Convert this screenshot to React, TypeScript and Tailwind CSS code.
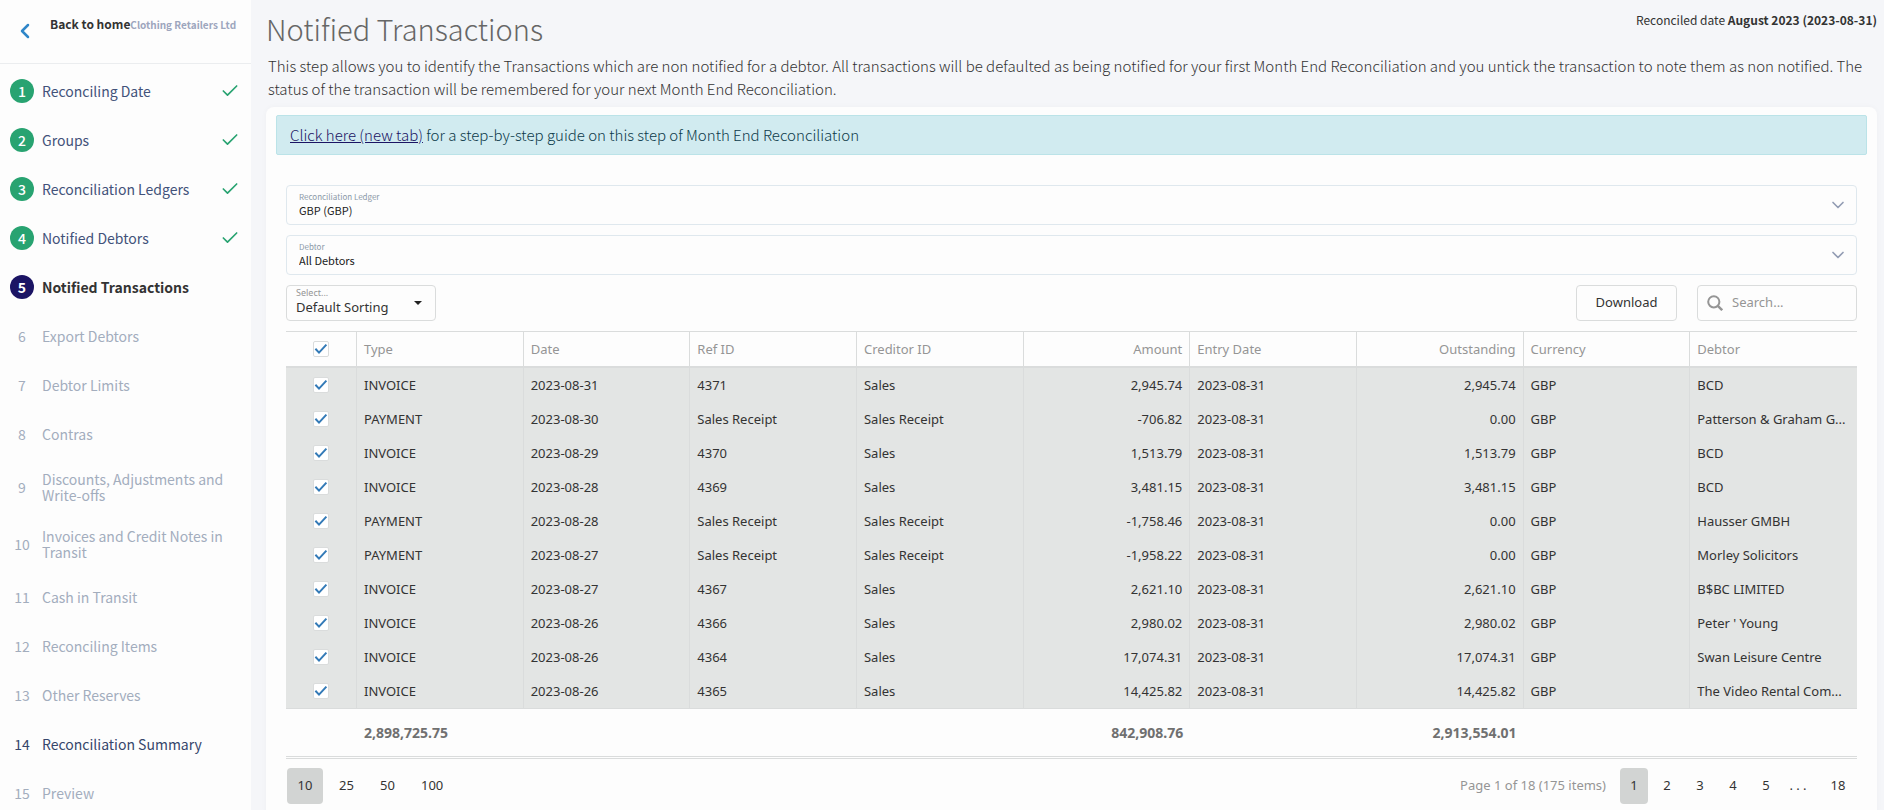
import { Check, ChevronDown, ChevronLeft } from "lucide-react";
import type React from "react";
import { useState } from "react";

type StepState = "done" | "current" | "open" | "locked";

interface Step {
	label: string;
	state: StepState;
}

interface Transaction {
	type: string;
	date: string;
	refId: string;
	creditorId: string;
	amount: string;
	entryDate: string;
	outstanding: string;
	debtor: string;
}

const steps: Step[] = [
	{ label: "Reconciling Date", state: "done" },
	{ label: "Groups", state: "done" },
	{ label: "Reconciliation Ledgers", state: "done" },
	{ label: "Notified Debtors", state: "done" },
	{ label: "Notified Transactions", state: "current" },
	{ label: "Export Debtors", state: "locked" },
	{ label: "Debtor Limits", state: "locked" },
	{ label: "Contras", state: "locked" },
	{ label: "Discounts, Adjustments and Write-offs", state: "locked" },
	{ label: "Invoices and Credit Notes in Transit", state: "locked" },
	{ label: "Cash in Transit", state: "locked" },
	{ label: "Reconciling Items", state: "locked" },
	{ label: "Other Reserves", state: "locked" },
	{ label: "Reconciliation Summary", state: "open" },
	{ label: "Preview", state: "locked" },
];

const transactions: Transaction[] = [
	{ type: "INVOICE", date: "2023-08-31", refId: "4371", creditorId: "Sales", amount: "2,945.74", entryDate: "2023-08-31", outstanding: "2,945.74", debtor: "BCD" },
	{ type: "PAYMENT", date: "2023-08-30", refId: "Sales Receipt", creditorId: "Sales Receipt", amount: "-706.82", entryDate: "2023-08-31", outstanding: "0.00", debtor: "Patterson & Graham G..." },
	{ type: "INVOICE", date: "2023-08-29", refId: "4370", creditorId: "Sales", amount: "1,513.79", entryDate: "2023-08-31", outstanding: "1,513.79", debtor: "BCD" },
	{ type: "INVOICE", date: "2023-08-28", refId: "4369", creditorId: "Sales", amount: "3,481.15", entryDate: "2023-08-31", outstanding: "3,481.15", debtor: "BCD" },
	{ type: "PAYMENT", date: "2023-08-28", refId: "Sales Receipt", creditorId: "Sales Receipt", amount: "-1,758.46", entryDate: "2023-08-31", outstanding: "0.00", debtor: "Hausser GMBH" },
	{ type: "PAYMENT", date: "2023-08-27", refId: "Sales Receipt", creditorId: "Sales Receipt", amount: "-1,958.22", entryDate: "2023-08-31", outstanding: "0.00", debtor: "Morley Solicitors" },
	{ type: "INVOICE", date: "2023-08-27", refId: "4367", creditorId: "Sales", amount: "2,621.10", entryDate: "2023-08-31", outstanding: "2,621.10", debtor: "B$BC LIMITED" },
	{ type: "INVOICE", date: "2023-08-26", refId: "4366", creditorId: "Sales", amount: "2,980.02", entryDate: "2023-08-31", outstanding: "2,980.02", debtor: "Peter ' Young" },
	{ type: "INVOICE", date: "2023-08-26", refId: "4364", creditorId: "Sales", amount: "17,074.31", entryDate: "2023-08-31", outstanding: "17,074.31", debtor: "Swan Leisure Centre" },
	{ type: "INVOICE", date: "2023-08-26", refId: "4365", creditorId: "Sales", amount: "14,425.82", entryDate: "2023-08-31", outstanding: "14,425.82", debtor: "The Video Rental Com..." },
];

const columns = [
	{ title: "Type" },
	{ title: "Date" },
	{ title: "Ref ID" },
	{ title: "Creditor ID" },
	{ title: "Amount", numeric: true },
	{ title: "Entry Date" },
	{ title: "Outstanding", numeric: true },
	{ title: "Currency" },
	{ title: "Debtor" },
];

const badgeStyles: Record<StepState, string> = {
	done: "bg-[#28a371] text-white font-medium",
	current: "bg-[#1b1464] text-white font-bold",
	open: "text-[#36466b]",
	locked: "text-[#a3adbd]",
};

const labelStyles: Record<StepState, string> = {
	done: "text-[#42527a]",
	current: "text-[#333] font-bold",
	open: "text-[#36466b]",
	locked: "text-[#a3adbd]",
};

const Sidebar: React.FC = () => (
	<aside className="w-[251px] shrink-0 bg-[#fdfdfd]">
		<div className="flex h-16 border-b border-[#ebedef] pt-[17px]">
			<a href="#home" className="flex text-[#333] leading-[14px]">
				<ChevronLeft className="ml-[13px] mt-0.5 h-6 w-6 text-[#2f86c8]" strokeWidth={2.5} />
				<span className="ml-[13px] text-[12px] font-bold">Back to home</span>
			</a>
			<span className="text-[10px] font-bold leading-[15px] text-[#9da6bd]">Clothing Retailers Ltd</span>
		</div>
		<nav aria-label="Reconciliation steps" className="pt-[3px]">
			<ol className="flex flex-col gap-px">
				{steps.map((step, i) => (
					<li key={step.label}>
						<a href={`#step-${i + 1}`} className="flex items-center py-3 pl-[10px] pr-[11px]">
							<span
								className={`flex h-6 w-6 shrink-0 items-center justify-center rounded-full text-[14px] leading-[22px] ${badgeStyles[step.state]}`}
							>
								{i + 1}
							</span>
							<span className={`ml-2 grow text-[14px] leading-4 ${labelStyles[step.state]}`}>{step.label}</span>
							{step.state === "done" && <Check className="h-5 w-5 text-[#28a371]" strokeWidth={2} />}
						</a>
					</li>
				))}
			</ol>
		</nav>
	</aside>
);

interface FilterSelectProps {
	id: string;
	label: string;
	value: string;
}

const FilterSelect: React.FC<FilterSelectProps> = ({ id, label, value }) => (
	<div className="relative flex h-10 flex-col rounded border border-[#dfe8ee] pt-[6px]">
		<label htmlFor={id} className="pl-3 text-[8px] leading-[10px] text-[#8b99a8]">
			{label}
		</label>
		<select id={id} className="w-full appearance-none bg-transparent pl-3 text-[11px] leading-4 text-[#222] outline-none">
			<option>{value}</option>
		</select>
		<ChevronDown className="pointer-events-none absolute right-2 top-[9px] h-5 w-5 text-[#929cb3]" strokeWidth={2} />
	</div>
);

interface TickBoxProps {
	label: string;
	checked: boolean;
	onChange: () => void;
}

const TickBox: React.FC<TickBoxProps> = ({ label, checked, onChange }) => (
	<span className="mx-auto grid h-4 w-4">
		<input
			type="checkbox"
			aria-label={label}
			checked={checked}
			onChange={onChange}
			className="col-start-1 row-start-1 h-4 w-4 appearance-none rounded-xs border border-[#dadcdc] bg-white"
		/>
		{checked && (
			<svg viewBox="0 0 16 16" className="pointer-events-none col-start-1 row-start-1 h-4 w-4" aria-hidden="true">
				<path d="M2.4 7.8 6 11.6 13.4 3.6" fill="none" stroke="#337ab7" strokeWidth="2" />
			</svg>
		)}
	</span>
);

const TransactionTable: React.FC = () => {
	const [selected, setSelected] = useState<boolean[]>(transactions.map(() => true));
	const allSelected = selected.every(Boolean);

	const toggle = (row: number) => setSelected(selected.map((s, i) => (i === row ? !s : s)));

	return (
		<table className="mt-[10px] w-full table-fixed border-separate border-spacing-0 border-t border-[#dadcdc] text-[13px] leading-[18px] text-[#333]">
			<colgroup>
				<col className="w-[71px]" />
				{columns.map((c) => (
					<col key={c.title} />
				))}
			</colgroup>
			<thead>
				<tr className="h-9 text-[#959595]">
					<th className="border-b-2 border-r border-[#dadcdc] p-0">
						<TickBox label="Select all" checked={allSelected} onChange={() => setSelected(selected.map(() => !allSelected))} />
					</th>
					{columns.map((c) => (
						<th
							key={c.title}
							className={`border-b-2 border-r border-[#dadcdc] px-[7px] py-0 font-normal last:border-r-0 ${c.numeric ? "text-right" : "text-left"}`}
						>
							{c.title}
						</th>
					))}
				</tr>
			</thead>
			<tbody>
				{transactions.map((t, row) => {
					const cells = [t.type, t.date, t.refId, t.creditorId, t.amount, t.entryDate, t.outstanding, "GBP", t.debtor];
					return (
						<tr key={`${t.refId}-${t.amount}`} className={`h-[34px] ${selected[row] ? "bg-[#e3e5e4]" : ""}`}>
							<td className="border-r border-[#dadcdc] p-0">
								<TickBox label={`Select row ${row + 1}`} checked={selected[row]} onChange={() => toggle(row)} />
							</td>
							{cells.map((cell, i) => (
								<td
									key={columns[i].title}
									className={`whitespace-nowrap border-r border-[#dadcdc] px-[7px] py-0 last:border-r-0 ${columns[i].numeric ? "text-right" : "text-left"}`}
								>
									{cell}
								</td>
							))}
						</tr>
					);
				})}
			</tbody>
			<tfoot>
				<tr className="h-[49px] text-[14px] font-bold text-[#707070]">
					<td className="border-t border-b border-[#dadcdc]" />
					<td className="border-t border-b border-[#dadcdc] px-[7px] py-0">2,898,725.75</td>
					<td colSpan={3} className="border-t border-b border-[#dadcdc]" />
					<td className="border-t border-b border-[#dadcdc] px-[7px] py-0 text-right">842,908.76</td>
					<td className="border-t border-b border-[#dadcdc]" />
					<td className="border-t border-b border-[#dadcdc] px-[7px] py-0 text-right">2,913,554.01</td>
					<td colSpan={2} className="border-t border-b border-[#dadcdc]" />
				</tr>
			</tfoot>
		</table>
	);
};

const Pager: React.FC = () => (
	<div className="mt-px flex items-center justify-between border-t border-[#dadcdc] px-px py-[9px] text-[13px] text-[#333]">
		<div className="flex gap-[6px]">
			{[10, 25, 50, 100].map((size) => (
				<button
					key={size}
					type="button"
					className={`h-9 rounded px-[10px] ${size === 10 ? "min-w-9 bg-[#d2d4d3]" : "min-w-[35px]"}`}
				>
					{size}
				</button>
			))}
		</div>
		<div className="flex items-center">
			<span className="mr-[14px] text-[#959595]">Page 1 of 18 (175 items)</span>
			<div className="flex gap-[5px]">
				{["1", "2", "3", "4", "5"].map((page) => (
					<button key={page} type="button" className={`h-9 w-7 rounded ${page === "1" ? "bg-[#d2d4d3]" : ""}`}>
						{page}
					</button>
				))}
			</div>
			<span className="w-9 text-center">. . .</span>
			<button type="button" className="ml-1 h-9 w-9">
				18
			</button>
		</div>
	</div>
);

const App: React.FC = () => {
	return (
		<div className="flex h-screen overflow-hidden bg-[#f5f6f9] font-['Noto_Sans_CJK_SC',sans-serif] text-[#333]">
			<Sidebar />
			<main className="flex min-w-0 grow flex-col pl-[15px] pr-[7px]">
				<header className="flex justify-between">
					<h1 className="pb-[2px] pt-2 text-[29px] font-light leading-[40px] text-[#666]">Notified Transactions</h1>
					<p className="pt-[11px] text-[12px] leading-[18px]">
						Reconciled date <strong>August 2023 (2023-08-31)</strong>
					</p>
				</header>
				<p className="mt-1 pl-[2px] text-[15px] font-light leading-[23px] text-[#333]">
					This step allows you to identify the Transactions which are non notified for a debtor. All transactions will be
					defaulted as being notified for your first Month End Reconciliation and you untick the transaction to note them as
					non notified. The status of the transaction will be remembered for your next Month End Reconciliation.
				</p>
				<section className="mt-[7px] grow rounded-t-lg bg-[#fdfdfd] px-[10px] pt-2 shadow-[0_0_6px_rgba(0,0,0,0.03)]">
					<div className="flex h-10 items-center rounded-xs border border-[#bbe3e8] bg-[#d1ebf0] pl-[13px] text-[15px] font-light text-[#0c3a4a]">
						<p>
							<a href="#guide" className="text-[#1b1464] underline">
								Click here (new tab)
							</a>{" "}
							for a step-by-step guide on this step of Month End Reconciliation
						</p>
					</div>
					<div className="px-[10px] pt-[30px]">
						<div className="flex flex-col gap-[10px]">
							<FilterSelect id="ledger" label="Reconciliation Ledger" value="GBP (GBP)" />
							<FilterSelect id="debtor" label="Debtor" value="All Debtors" />
						</div>
						<div className="font-['Noto_Sans',sans-serif]">
							<div className="mt-[10px] flex items-center">
								<div className="relative flex h-9 w-[150px] flex-col rounded border border-[#dadcdc] pt-[2px] text-[#333]">
									<label htmlFor="sorting" className="pl-[9px] text-[9px] leading-[10px] text-[#959595]">
										Select...
									</label>
									<select id="sorting" className="w-full appearance-none bg-transparent pl-[9px] text-[13px] leading-[19px] outline-none">
										<option>Default Sorting</option>
									</select>
									<svg viewBox="0 0 8 4" className="pointer-events-none absolute right-[13px] top-[15px] h-1 w-2" aria-hidden="true">
										<path d="M0 0h8L4 4z" fill="#222" />
									</svg>
								</div>
								<button type="button" className="ml-auto h-9 w-[101px] rounded border border-[#dadcdc] text-[13px]">
									Download
								</button>
								<div className="ml-5 flex h-9 w-40 items-center rounded border border-[#dadcdc] pl-[9px]">
									<svg viewBox="0 0 16 16" className="h-4 w-4 shrink-0" fill="none" stroke="#959595" strokeWidth="2" aria-hidden="true">
										<circle cx="6.8" cy="6.8" r="5.6" />
										<path d="m10.8 10.8 4.4 4.4" strokeWidth="2.4" />
									</svg>
									<input
										type="search"
										aria-label="Search"
										placeholder="Search..."
										className="ml-[9px] w-full min-w-0 bg-transparent text-[13px] outline-none placeholder:text-[#959595]"
									/>
								</div>
							</div>
							<TransactionTable />
							<Pager />
						</div>
					</div>
				</section>
			</main>
		</div>
	);
};

export default App;
